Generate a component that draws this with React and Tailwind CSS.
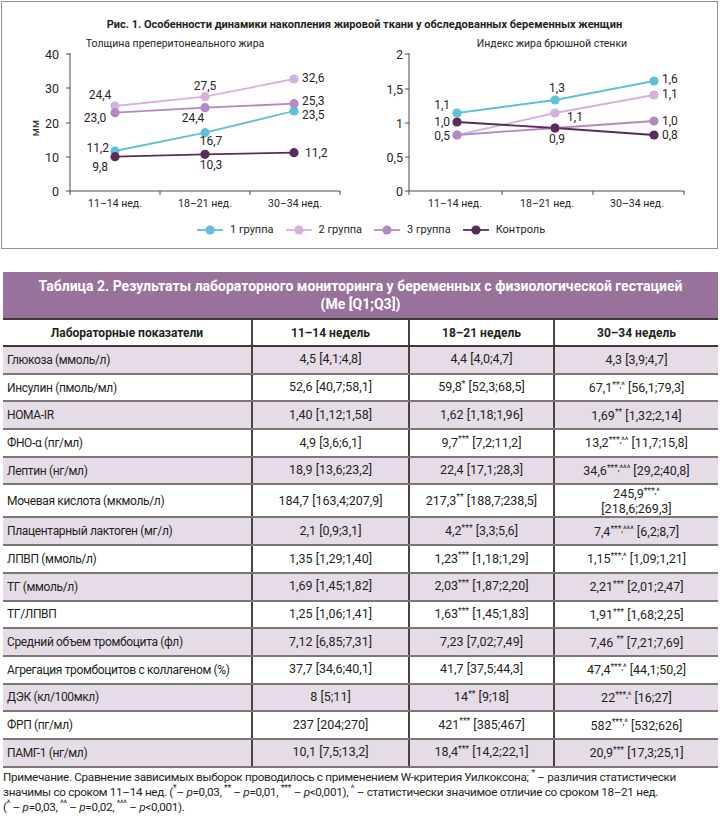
import React from "react";

const C1 = "#5fc0d7";
const C2 = "#d5b1dc";
const C3 = "#b488c3";
const C4 = "#5b2b5d";
const AX = "#4a4a4a";
const FONT = "Roboto, sans-serif";

function Chart({ ox, oy, width, subtitle, subX, yAxisX, yTop, yBottom, yLabels, yLabelX, xAxisEnd, xTicks, cats, xs, series, labels, unit }) {
  return (
    <svg width={width} height={180} className="block shrink-0">
      <g transform={`translate(${-ox},${-oy})`} fontFamily={FONT} fill="#2a2426">
        <text x={subX} y={47} fontSize="10.5" textAnchor="middle">{subtitle}</text>
        {unit && (
          <text transform="translate(39,128) rotate(-90)" fontSize="11" textAnchor="middle">{unit}</text>
        )}
        <line x1={yAxisX} y1={yTop} x2={yAxisX} y2={yBottom} stroke={AX} strokeWidth="1" />
        <line x1={yAxisX} y1={yBottom} x2={xAxisEnd} y2={yBottom} stroke={AX} strokeWidth="1" />
        {yLabels.map(([t, y]) => (
          <g key={t}>
            <line x1={yAxisX - 4} y1={y} x2={yAxisX} y2={y} stroke={AX} strokeWidth="1" />
            <text x={yLabelX} y={y + 4.5} fontSize="12.5" textAnchor="end">{t}</text>
          </g>
        ))}
        {xTicks.map((x) => (
          <line key={x} x1={x} y1={yBottom} x2={x} y2={yBottom + 4} stroke={AX} strokeWidth="1" />
        ))}
        {cats.map(([t, x]) => (
          <text key={t} x={x} y={207} fontSize="10.5" textAnchor="middle">{t}</text>
        ))}
        {series.map((s, i) => (
          <polyline
            key={i}
            points={xs.map((x, j) => `${x},${s.y[j]}`).join(" ")}
            fill="none"
            stroke={s.c}
            strokeWidth="1.8"
          />
        ))}
        {series.map((s, i) =>
          xs.map((x, j) => <circle key={`${i}-${j}`} cx={x} cy={s.y[j]} r="4.6" fill={s.c} />)
        )}
        {labels.map(([t, x, y, a], i) => (
          <text key={i} x={x} y={y + 4.2} fontSize="12" textAnchor={a || "middle"}>{t}</text>
        ))}
      </g>
    </svg>
  );
}

function LegendItem({ color, label }) {
  return (
    <div className="flex items-center gap-[7px]">
      <svg width="26" height="10" className="block">
        <line x1="0" y1="5" x2="26" y2="5" stroke={color} strokeWidth="1.8" />
        <circle cx="13" cy="5" r="4.6" fill={color} />
      </svg>
      <span className="text-[11px] leading-[14px]">{label}</span>
    </div>
  );
}

const S = ({ children }) => <sup className="text-[8.5px]">{children}</sup>;

function V({ v }) {
  if (typeof v === "string") return <span>{v}</span>;
  return (
    <span>
      {v[0]}
      <S>{v[1]}</S>{" "}{v[2]}
    </span>
  );
}

const rows = [
  ["Глюкоза (ммоль/л)", "4,5 [4,1;4,8]", "4,4 [4,0;4,7]", "4,3 [3,9;4,7]"],
  ["Инсулин (пмоль/мл)", "52,6 [40,7;58,1]", ["59,8", "*", "[52,3;68,5]"], ["67,1", "**,^", "[56,1;79,3]"]],
  ["HOMA-IR", "1,40 [1,12;1,58]", "1,62 [1,18;1,96]", ["1,69", "**", "[1,32;2,14]"]],
  ["ФНО-α (пг/мл)", "4,9 [3,6;6,1]", ["9,7", "***", "[7,2;11,2]"], ["13,2", "***,^^", "[11,7;15,8]"]],
  ["Лептин (нг/мл)", "18,9 [13,6;23,2]", "22,4 [17,1;28,3]", ["34,6", "***,^^^", "[29,2;40,8]"]],
  ["Мочевая кислота (мкмоль/л)", "184,7 [163,4;207,9]", ["217,3", "**", "[188,7;238,5]"], "TALL"],
  ["Плацентарный лактоген (мг/л)", "2,1 [0,9;3,1]", ["4,2", "***", "[3,3;5,6]"], ["7,4", "***,^^^", "[6,2;8,7]"]],
  ["ЛПВП (ммоль/л)", "1,35 [1,29;1,40]", ["1,23", "***", "[1,18;1,29]"], ["1,15", "***,^", "[1,09;1,21]"]],
  ["ТГ (ммоль/л)", "1,69 [1,45;1,82]", ["2,03", "***", "[1,87;2,20]"], ["2,21", "***", "[2,01;2,47]"]],
  ["ТГ/ЛПВП", "1,25 [1,06;1,41]", ["1,63", "***", "[1,45;1,83]"], ["1,91", "***", "[1,68;2,25]"]],
  ["Средний объем тромбоцита (фл)", "7,12 [6,85;7,31]", "7,23 [7,02;7,49]", ["7,46 ", "**", "[7,21;7,69]"]],
  ["Агрегация тромбоцитов с коллагеном (%)", "37,7 [34,6;40,1]", "41,7 [37,5;44,3]", ["47,4", "***,^", "[44,1;50,2]"]],
  ["ДЭК (кл/100мкл)", "8 [5;11]", ["14", "**", "[9;18]"], ["22", "***,^", "[16;27]"]],
  ["ФРП (пг/мл)", "237 [204;270]", ["421", "***", "[385;467]"], ["582", "***,^", "[532;626]"]],
  ["ПАМГ-1 (нг/мл)", "10,1 [7,5;13,2]", ["18,4", "***", "[14,2;22,1]"], ["20,9", "***", "[17,3;25,1]"]],
];

export default function App() {
  return (
    <div className="w-[720px] h-[817px] overflow-hidden bg-white text-[#231f20] [font-family:Roboto,sans-serif]">
      {/* Figure */}
      <div className="ml-[1px] mt-[1px] w-[717px] h-[248px] border border-[#a088a4] flex flex-col">
        <div className="pt-[15px] h-[32px] pl-[10px] text-center text-[11px] font-bold leading-[16px]">
          Рис. 1. Особенности динамики накопления жировой ткани у обследованных беременных женщин
        </div>
        <div className="flex">
          <Chart
            ox={2}
            oy={34}
            width={358}
            subtitle="Толщина преперитонеального жира"
            subX={175}
            unit="мм"
            yAxisX={70}
            yTop={53}
            yBottom={191}
            yLabels={[["40", 54], ["30", 88], ["20", 123], ["10", 157], ["0", 191]]}
            yLabelX={59}
            xAxisEnd={340}
            xTicks={[70, 160, 250, 340]}
            cats={[["11–14 нед.", 115], ["18–21 нед.", 205], ["30–34 нед.", 295]]}
            xs={[115, 205, 294]}
            series={[
              { c: C1, y: [151, 132.7, 111] },
              { c: C2, y: [106, 96.7, 79] },
              { c: C3, y: [112.7, 107.7, 103.7] },
              { c: C4, y: [156.7, 154.3, 152.7] },
            ]}
            labels={[
              ["24,4", 100, 95],
              ["23,0", 95, 118],
              ["11,2", 109, 148, "end"],
              ["9,8", 108, 167, "end"],
              ["27,5", 205, 86],
              ["24,4", 193, 118],
              ["16,7", 211, 141],
              ["10,3", 211, 165],
              ["32,6", 302, 78, "start"],
              ["25,3", 302, 100.5, "start"],
              ["23,5", 302, 114.5, "start"],
              ["11,2", 305, 153, "start"],
            ]}
          />
          <Chart
            ox={360}
            oy={34}
            width={357}
            subtitle="Индекс жира брюшной стенки"
            subX={552}
            yAxisX={409}
            yTop={53}
            yBottom={191}
            yLabels={[["2", 54], ["1,5", 89], ["1", 123], ["0,5", 157], ["0", 191]]}
            yLabelX={403}
            xAxisEnd={684}
            xTicks={[409, 502, 593, 684]}
            cats={[["11–14 нед.", 455], ["18–21 нед.", 547], ["30–34 нед.", 637]]}
            xs={[457, 555, 654]}
            series={[
              { c: C1, y: [113, 100, 81] },
              { c: C2, y: [135, 113, 95] },
              { c: C3, y: [135, 128, 121] },
              { c: C4, y: [122, 128, 135] },
            ]}
            labels={[
              ["1,1", 450, 105, "end"],
              ["1,0", 450, 121.5, "end"],
              ["0,5", 450, 135.5, "end"],
              ["1,3", 557, 88],
              ["1,1", 575, 117],
              ["0,9", 557, 139],
              ["1,6", 662, 79, "start"],
              ["1,1", 662, 94, "start"],
              ["1,0", 662, 121, "start"],
              ["0,8", 662, 135, "start"],
            ]}
          />
        </div>
        <div className="h-[32px] flex items-center gap-[12px] pl-[195px]">
          <LegendItem color={C1} label="1 группа" />
          <LegendItem color={C2} label="2 группа" />
          <LegendItem color={C3} label="3 группа" />
          <LegendItem color={C4} label="Контроль" />
        </div>
      </div>

      {/* Table */}
      <div className="mt-[23px] ml-[3px] w-[715px] text-[12.5px]">
        <div className="h-[46px] bg-[#98729b] text-white font-bold text-[14px] leading-[18px] flex flex-col items-center justify-center text-center">
          <div>Таблица 2. Результаты лабораторного мониторинга у беременных с физиологической гестацией</div>
          <div>(Me [Q1;Q3])</div>
        </div>
        <div className="grid grid-cols-[248px_157px_145px_165px] h-[29px] border-y-2 border-[#3f3838] font-bold text-[12px]">
          <div className="flex items-center justify-center">Лабораторные показатели</div>
          <div className="flex items-center justify-center border-l-2 border-[#4a4343]">11–14 недель</div>
          <div className="flex items-center justify-center border-l-2 border-[#4a4343]">18–21 недель</div>
          <div className="flex items-center justify-center border-l-2 border-[#4a4343]">30–34 недель</div>
        </div>
        {rows.map((r, i) => {
          const tall = r[3] === "TALL";
          return (
            <div
              key={i}
              className={`grid grid-cols-[248px_157px_145px_165px] border-b-2 border-[#7d7676] ${tall ? "h-[33px]" : "h-[27.7px]"} ${i % 2 === 0 ? "bg-[#e6dce8]" : "bg-white"}`}
            >
              <div className="flex items-center pl-[4px] text-[12px] tracking-[-0.35px] whitespace-nowrap">{r[0]}</div>
              <div className="flex items-center justify-center border-l-2 border-[#4a4343]"><V v={r[1]} /></div>
              <div className="flex items-center justify-center border-l-2 border-[#4a4343]"><V v={r[2]} /></div>
              <div className="flex items-center justify-center border-l-2 border-[#4a4343] text-center leading-[15px]">
                {tall ? (
                  <div>
                    245,9<S>***,^</S>
                    <br />
                    [218,6;269,3]
                  </div>
                ) : (
                  <V v={r[3]} />
                )}
              </div>
            </div>
          );
        })}
        <div className="pt-[2px] text-[11.7px] leading-[15px] tracking-[-0.3px] whitespace-nowrap">
          Примечание. Сравнение зависимых выборок проводилось с применением W-критерия Уилкоксона; <S>*</S> – различия статистически
          <br />
          значимы со сроком 11–14 нед. (<S>*</S>– <i>p</i>=0,03, <S>**</S> – <i>p</i>=0,01, <S>***</S> – <i>p</i>&lt;0,001), <S>^</S> – статистически значимое отличие со сроком 18–21 нед.
          <br />
          (<S>^</S> – <i>p</i>=0,03, <S>^^</S> – <i>p</i>=0,02, <S>^^^</S> – <i>p</i>&lt;0,001).
        </div>
      </div>
    </div>
  );
}
